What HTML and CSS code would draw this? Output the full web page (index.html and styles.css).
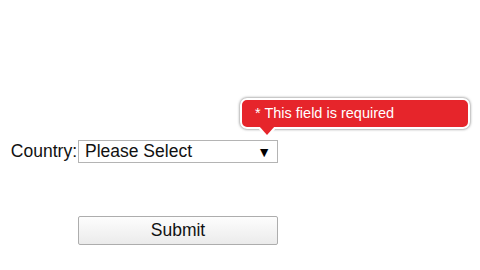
FILE: index.html
```html
<!DOCTYPE html>
<html lang="en">
<head>
    <meta charset="UTF-8">
    <title>Country form</title>
    <link rel="stylesheet" href="styles.css">
</head>
<body>
    <form class="form">
        <div class="row">
            <label class="label">Country:</label>
            <div class="select-wrap">
                <div class="select-box">
                    <span>Please Select</span>
                    <span class="caret">&#9660;</span>
                </div>
                <div class="error-tip">* This field is required</div>
            </div>
        </div>
        <div class="actions">
            <button type="button" class="submit">Submit</button>
        </div>
    </form>
</body>
</html>
```

FILE: styles.css
```css
body {
    margin: 0;
    font-family: "Liberation Sans", Arial, sans-serif;
    color: #111;
    background: #fff;
}

.form {
    padding-top: 140px;
}

.row {
    display: flex;
    align-items: center;
    gap: 1px;
}

.label {
    width: 77px;
    text-align: right;
    font-size: 17.5px;
}

.select-wrap {
    position: relative;
}

.select-box {
    box-sizing: border-box;
    width: 200px;
    height: 23px;
    border: 1px solid #b4b4b4;
    display: flex;
    align-items: center;
    justify-content: space-between;
    padding: 0 6px 0 6px;
    font-size: 17.5px;
    background: #fff;
}

.caret {
    font-size: 14px;
    color: #000;
}

/* validation bubble */
.error-tip {
    position: absolute;
    left: 162px;
    top: -42px;
    box-sizing: border-box;
    width: 230px;
    height: 31px;
    padding-left: 13px;
    line-height: 27px;
    border: 2px solid #fff;
    border-radius: 7px;
    background: #e6252b;
    color: #fff;
    font-size: 14.5px;
    white-space: nowrap;
    box-shadow: 0 0 3px rgba(0, 0, 0, 0.6);
}

.error-tip::before,
.error-tip::after {
    content: "";
    position: absolute;
    width: 0;
    height: 0;
    border-style: solid;
}

.error-tip::before {
    left: 15px;
    top: 27px;
    border-width: 11px 10px 0 10px;
    border-color: #fff transparent transparent transparent;
}

.error-tip::after {
    left: 17px;
    top: 26px;
    border-width: 9px 8px 0 8px;
    border-color: #e6252b transparent transparent transparent;
}

.actions {
    margin-top: 53px;
    padding-left: 78px;
}

.submit {
    box-sizing: border-box;
    width: 200px;
    height: 29px;
    border: 1px solid #adadad;
    border-radius: 2px;
    background: linear-gradient(#fdfdfd, #ebebeb);
    font-family: inherit;
    font-size: 17.5px;
    color: #111;
    padding: 0;
}
```
